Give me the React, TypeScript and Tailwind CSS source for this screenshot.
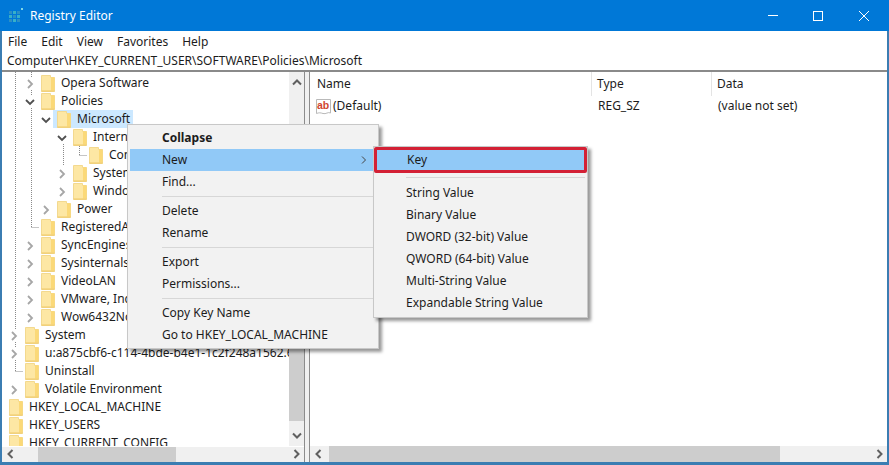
import { ReactNode } from 'react'

const FONT = 'font-["Noto_Sans",sans-serif]'

type Node = { label: string; level: number; arrow?: 'open' | 'closed'; selected?: boolean }

const nodes: Node[] = [
  { label: 'Opera Software', level: 1, arrow: 'closed' },
  { label: 'Policies', level: 1, arrow: 'open' },
  { label: 'Microsoft', level: 2, arrow: 'open', selected: true },
  { label: 'Internet Explorer', level: 3, arrow: 'open' },
  { label: 'Control Panel', level: 4 },
  { label: 'System', level: 3, arrow: 'closed' },
  { label: 'Windows', level: 3, arrow: 'closed' },
  { label: 'Power', level: 2, arrow: 'closed' },
  { label: 'RegisteredApplications', level: 1 },
  { label: 'SyncEngines', level: 1, arrow: 'closed' },
  { label: 'Sysinternals', level: 1, arrow: 'closed' },
  { label: 'VideoLAN', level: 1, arrow: 'closed' },
  { label: 'VMware, Inc.', level: 1, arrow: 'closed' },
  { label: 'Wow6432Node', level: 1, arrow: 'closed' },
  { label: 'System', level: 0, arrow: 'closed' },
  { label: 'u:a875cbf6-c114-4bde-b4e1-1c2f248a1562.669', level: 0, arrow: 'closed' },
  { label: 'Uninstall', level: 0 },
  { label: 'Volatile Environment', level: 0, arrow: 'closed' },
  { label: 'HKEY_LOCAL_MACHINE', level: -1 },
  { label: 'HKEY_USERS', level: -1 },
  { label: 'HKEY_CURRENT_CONFIG', level: -1 },
]

function Folder() {
  return (
    <svg width="14" height="17" viewBox="0 0 14 17" className="shrink-0">
      <path d="M0.5 0.5H9.5V2.5H13.5V16.5H0.5Z" fill="#fde7a4" stroke="#f3d98f" />
      <path d="M10 2V15.5H13.5V2.5Z" fill="#fbd978" />
      <path d="M0.5 15.5H13.5V16.5H0.5Z" fill="#eec868" />
    </svg>
  )
}

function Chevron({ open, dark }: { open?: boolean; dark?: boolean }) {
  const color = dark ? '#505050' : '#a6a6a6'
  if (open) {
    return (
      <svg width="10" height="10" viewBox="0 0 10 10">
        <path d="M1 3L5 7L9 3" fill="none" stroke="#505050" strokeWidth="1.8" />
      </svg>
    )
  }
  return (
    <svg width="10" height="10" viewBox="0 0 10 10">
      <path d="M3 1L7 5L3 9" fill="none" stroke={color} strokeWidth="1.8" />
    </svg>
  )
}

function TreeRow({ node }: { node: Node }) {
  const pad = 7 + (node.level + 1) * 16
  return (
    <div className="relative flex h-[18px] items-center" style={{ paddingLeft: pad }}>
      {node.arrow && (
        <span
          className="absolute flex h-[12px] w-[12px] items-center justify-center bg-white"
          style={{ left: pad - 17, top: 4 }}
        >
          <Chevron open={node.arrow === 'open'} />
        </span>
      )}
      <span className={`flex h-[18px] items-center ${node.selected ? '-ml-[4px] bg-[#cce8ff] pl-[4px] pr-[2px]' : ''}`}>
        <Folder />
        <span className="ml-[6px] whitespace-nowrap pr-[1px]">{node.label}</span>
      </span>
    </div>
  )
}

function Tree() {
  return (
    <div className="relative h-[374px] w-[287px] overflow-hidden bg-white pt-[2px]">
      <svg className="absolute left-0 top-0" width="287" height="374">
        <g stroke="#8a8a8a" strokeDasharray="1 1" fill="none">
          <path d="M13.5 0V299M13.5 299.5H21" />
          <path d="M29.5 0V155M29.5 155.5H37" />
          <path d="M61.5 72V94" />
          <path d="M77.5 72V83M77.5 83.5H85" />
        </g>
      </svg>
      <div className="relative">
        {nodes.map((n, i) => (
          <TreeRow key={i} node={n} />
        ))}
      </div>
    </div>
  )
}

function ScrollArrow({ dir }: { dir: 'up' | 'down' | 'left' | 'right' }) {
  const d = {
    up: 'M2 7.5L6 3.5L10 7.5',
    down: 'M2 4.5L6 8.5L10 4.5',
    left: 'M7.5 2L3.5 6L7.5 10',
    right: 'M4.5 2L8.5 6L4.5 10',
  }[dir]
  return (
    <svg width="12" height="12" viewBox="0 0 12 12">
      <path d={d} fill="none" stroke="#606060" strokeWidth="2" />
    </svg>
  )
}

function HScroll({ left, width }: { left: number; width: number }) {
  return (
    <div className="flex h-[16px] items-stretch bg-[#f0f0f0]">
      <div className="flex w-[17px] shrink-0 items-center justify-center">
        <ScrollArrow dir="left" />
      </div>
      <div className="relative flex-1">
        <div className="absolute inset-y-0 bg-[#cdcdcd]" style={{ left, width }} />
      </div>
      <div className="flex w-[17px] shrink-0 items-center justify-center">
        <ScrollArrow dir="right" />
      </div>
    </div>
  )
}

function MenuItem({ children, bold, active, arrow }: { children: ReactNode; bold?: boolean; active?: boolean; arrow?: boolean }) {
  return (
    <div className={`relative flex h-[22px] items-center pl-[32px] ${active ? 'bg-[#91c9f7]' : ''} ${bold ? 'font-bold' : ''}`}>
      {children}
      {arrow && (
        <svg className="absolute right-[9px] top-[7px]" width="6" height="8" viewBox="0 0 6 8">
          <path d="M1 0.5L4.5 4L1 7.5" fill="none" stroke="#444" strokeWidth="1" />
        </svg>
      )}
    </div>
  )
}

function Sep() {
  return <div className="mx-[2px] my-[3px] ml-[32px] h-px bg-[#d7d7d7]" />
}

function ContextMenu() {
  return (
    <div className="absolute left-[127px] top-[124px] w-[252px] border border-[#c8c8c8] bg-[#f2f2f2] px-[2px] py-[2px] shadow-[3px_3px_3px_rgba(0,0,0,0.4)]">
      <MenuItem bold>Collapse</MenuItem>
      <MenuItem active arrow>New</MenuItem>
      <MenuItem>Find...</MenuItem>
      <Sep />
      <MenuItem>Delete</MenuItem>
      <MenuItem>Rename</MenuItem>
      <Sep />
      <MenuItem>Export</MenuItem>
      <MenuItem>Permissions...</MenuItem>
      <Sep />
      <MenuItem>Copy Key Name</MenuItem>
      <MenuItem>Go to HKEY_LOCAL_MACHINE</MenuItem>
    </div>
  )
}

function SubMenu() {
  return (
    <div className="absolute left-[373px] top-[146px] w-[215px] border border-[#c8c8c8] bg-[#f2f2f2] pb-[3px] shadow-[3px_3px_3px_rgba(0,0,0,0.4)]">
      <div className="flex h-[26px] items-center rounded-[2px] border-[3px] border-[#d32035] bg-[#91c9f7] pl-[30px]">Key</div>
      <div className="mx-[2px] my-[4px] ml-[32px] h-px bg-[#d7d7d7]" />
      <MenuItem>String Value</MenuItem>
      <MenuItem>Binary Value</MenuItem>
      <MenuItem>DWORD (32-bit) Value</MenuItem>
      <MenuItem>QWORD (64-bit) Value</MenuItem>
      <MenuItem>Multi-String Value</MenuItem>
      <MenuItem>Expandable String Value</MenuItem>
    </div>
  )
}

function AppIcon() {
  const cells: [number, number, string][] = [
    [0, 3, '#2c8fc4'], [4, 3, '#38b0c8'], [8, 3, '#2c8fc4'],
    [0, 7, '#38b0c8'], [4, 7, '#2c8fc4'], [8, 7, '#38b0c8'],
    [0, 11, '#2c8fc4'], [4, 11, '#38b0c8'], [8, 11, '#2c8fc4'],
  ]
  return (
    <svg width="14" height="15" viewBox="0 0 14 15" className="shrink-0">
      {cells.map(([x, y, c], i) => (
        <rect key={i} x={x} y={y} width="3" height="3" fill={c} />
      ))}
      <rect x="12" y="0" width="2" height="2" fill="#7fd6e6" />
    </svg>
  )
}

function StringIcon() {
  return (
    <svg width="17" height="17" viewBox="0 0 17 17" className="shrink-0">
      <path d="M1.5 1.5H15.5V15C13 13.5 11 16.5 8 15.5C5.5 14.7 4 14.5 1.5 15.5Z" fill="#fff" stroke="#b9b9b9" />
      <text x="2" y="11" fontSize="10.5" fontWeight="700" fill="#d0452f" fontFamily="Liberation Sans, sans-serif">ab</text>
    </svg>
  )
}

export default function App() {
  return (
    <div className={`${FONT} relative flex h-[465px] w-[889px] flex-col overflow-hidden bg-[#3b7db2] text-[12px] leading-none text-[#1c1c1c]`}>
      <div className="flex h-[31px] shrink-0 items-center bg-[#0078d7] pl-[9px] text-white">
        <AppIcon />
        <span className="ml-[7px] text-[12px]">Registry Editor</span>
        <div className="ml-auto flex items-center">
          <svg width="12" height="12" viewBox="0 0 12 12" className="mr-[33px]"><path d="M1 5.5H11" stroke="#fff" /></svg>
          <svg width="12" height="12" viewBox="0 0 12 12" className="mr-[34px]"><rect x="1.5" y="1.5" width="9" height="9" fill="none" stroke="#fff" /></svg>
          <svg width="12" height="12" viewBox="0 0 12 12" className="mr-[19px]"><path d="M1 1L11 11M11 1L1 11" stroke="#fff" /></svg>
        </div>
      </div>

      <div className="mx-[2px] flex h-[21px] shrink-0 items-center gap-[14px] bg-white pl-[6px]">
        <span>File</span>
        <span>Edit</span>
        <span>View</span>
        <span>Favorites</span>
        <span>Help</span>
      </div>

      <div className="mx-[2px] flex h-[20px] shrink-0 items-center border-b-2 border-[#8a8a8a] bg-white pl-[5px]">
        Computer\HKEY_CURRENT_USER\SOFTWARE\Policies\Microsoft
      </div>

      <div className="mx-[2px] flex h-[390px] shrink-0 bg-[#f0f0f0]">
        <div className="flex w-[303px] shrink-0 flex-col border-r border-[#8c8c8c]">
          <div className="flex h-[374px]">
            <Tree />
            <div className="relative flex w-[15px] flex-col items-center justify-between py-[5px]">
              <div className="absolute inset-x-0 top-[140px] h-[209px] bg-[#cdcdcd]" />
              <ScrollArrow dir="up" />
              <ScrollArrow dir="down" />
            </div>
          </div>
          <div className="h-px bg-white" />
          <HScroll left={19} width={138} />
        </div>

        <div className="ml-[4px] flex flex-1 flex-col border-l border-[#8c8c8c] bg-white">
          <div className="flex h-[25px] shrink-0 items-start">
            <div className="flex h-[24px] w-[282px] items-center border-r border-[#e4e4e4] pl-[7px]">Name</div>
            <div className="flex h-[24px] w-[120px] items-center border-r border-[#e4e4e4] pl-[5px]">Type</div>
            <div className="flex h-[24px] items-center pl-[5px]">Data</div>
          </div>
          <div className="flex h-[18px] shrink-0 items-center">
            <div className="flex w-[282px] items-center pl-[5px]">
              <StringIcon />
              <span className="ml-[1px]">(Default)</span>
            </div>
            <div className="w-[120px] pl-[6px]">REG_SZ</div>
            <div className="pl-[6px]">(value not set)</div>
          </div>
          <div className="flex-1" />
          <HScroll left={2} width={451} />
        </div>
      </div>

      <ContextMenu />
      <SubMenu />
    </div>
  )
}
